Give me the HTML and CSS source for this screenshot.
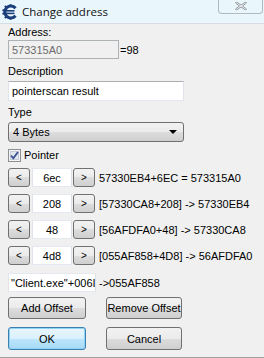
FILE: index.html
```html
<!DOCTYPE html>
<html lang="en">
<head>
    <meta charset="UTF-8">
    <title>Change address</title>
    <link rel="stylesheet" href="styles.css">
</head>
<body>

<div class="window">
    <!-- Title bar -->
    <div class="titlebar">
        <svg class="app-icon" width="16" height="16" viewBox="0 0 16 16">
            <path d="M13.5 4.2 A6 6 0 1 0 13.5 11.8" fill="none" stroke="#1b3f7a" stroke-width="3"/>
            <path d="M8 0.5 l1 2 M3 1.8 l1.3 1.8 M0.5 6 l2 0.8 M0.5 10 l2 -0.8 M3 14.2 l1.3 -1.8 M8 15.5 l1 -2" stroke="#1b3f7a" stroke-width="2"/>
            <rect x="3.5" y="6" width="9" height="1.6" fill="#1b3f7a"/>
            <rect x="3.5" y="8.6" width="9" height="1.6" fill="#1b3f7a"/>
        </svg>
        <span class="title">Change address</span>
        <div class="close-btn">
            <svg width="14" height="10" viewBox="0 0 14 10">
                <path d="M2.5 1 L7 4 L11.5 1 L12.5 2 L8.5 5 L12.5 8 L11.5 9 L7 6 L2.5 9 L1.5 8 L5.5 5 L1.5 2 Z" fill="#f4f4f4" stroke="#8a8f96" stroke-width="0.9"/>
            </svg>
        </div>
    </div>

    <div class="content">
        <div class="label">Address:</div>
        <div class="addr-row">
            <div class="textbox addr">573315A0</div>
            <span>=98</span>
        </div>

        <div class="label lbl-desc">Description</div>
        <div class="textbox desc">pointerscan result</div>

        <div class="label lbl-type">Type</div>
        <div class="combo">
            <span>4 Bytes</span>
            <span class="combo-arrow"></span>
        </div>

        <div class="check-row">
            <svg width="13" height="13" viewBox="0 0 13 13">
                <rect x="0.5" y="0.5" width="12" height="12" fill="#f4f4f4" stroke="#8e8f8f"/>
                <rect x="2.5" y="2.5" width="8" height="8" fill="#dfe6ee" stroke="#c4cdd8"/>
                <path d="M3 6.5 L5.3 9.3 L10 3" fill="none" stroke="#3c4f8f" stroke-width="1.8"/>
            </svg>
            <span>Pointer</span>
        </div>

        <div class="offset-row">
            <div class="btn spin">&lt;</div>
            <div class="textbox offset">6ec</div>
            <div class="btn spin">&gt;</div>
            <span class="offset-text">57330EB4+6EC = 573315A0</span>
        </div>
        <div class="offset-row">
            <div class="btn spin">&lt;</div>
            <div class="textbox offset">208</div>
            <div class="btn spin">&gt;</div>
            <span class="offset-text">[57330CA8+208] -&gt; 57330EB4</span>
        </div>
        <div class="offset-row">
            <div class="btn spin">&lt;</div>
            <div class="textbox offset">48</div>
            <div class="btn spin">&gt;</div>
            <span class="offset-text">[56AFDFA0+48] -&gt; 57330CA8</span>
        </div>
        <div class="offset-row">
            <div class="btn spin">&lt;</div>
            <div class="textbox offset">4d8</div>
            <div class="btn spin">&gt;</div>
            <span class="offset-text">[055AF858+4D8] -&gt; 56AFDFA0</span>
        </div>

        <div class="base-row">
            <div class="textbox base">"Client.exe"+006I</div>
            <span class="base-text">-&gt;055AF858</span>
        </div>

        <div class="btn-row">
            <div class="btn wide">Add Offset</div>
            <div class="btn wide right">Remove Offset</div>
        </div>
        <div class="btn-row ok-row">
            <div class="btn wide default">OK</div>
            <div class="btn wide right">Cancel</div>
        </div>
    </div>
</div>

</body>
</html>
```

FILE: styles.css
```css
body {
    margin: 0;
    background-color: #f0f0f0;
    font-family: 'Liberation Sans', Arial, sans-serif;
    font-size: 11px;
    color: #000;
}
.window {
    width: 264px;
    height: 357px;
    border-bottom: 1px solid #a0a0a0;
    background-color: #f0f0f0;
    overflow: hidden;
}
.titlebar {
    height: 23px;
    border-bottom: 1px solid #d8dde3;
    background-color: #e9f7fd;
    display: flex;
    align-items: center;
    position: relative;
}
.app-icon {
    margin-left: 2px;
    margin-top: 1px;
}
.title {
    margin-left: 4px;
    font-family: 'Open Sans', sans-serif;
    font-size: 11.5px;
    color: #111;
}
.close-btn {
    position: absolute;
    top: -1px;
    right: 1px;
    width: 43px;
    height: 14px;
    border: 1px solid #b2b9c2;
    border-top: none;
    border-radius: 0 0 4px 4px;
    display: flex;
    justify-content: center;
    align-items: center;
}
.content {
    padding: 2px 8px 0 8px;
}
.label {
    height: 13px;
    line-height: 13px;
}
.addr-row {
    display: flex;
    align-items: center;
    margin-top: 1px;
    height: 19px;
}
.textbox {
    box-sizing: border-box;
    background-color: #fff;
    border: 1px solid #abadb3;
    border-top-color: #e3e9ef;
    border-left-color: #e2e3ea;
    border-right-color: #dbdfe6;
    border-bottom-color: #e3e9ef;
    padding: 0 3px;
    display: flex;
    align-items: center;
    white-space: nowrap;
    overflow: hidden;
}
.addr {
    width: 111px;
    height: 19px;
    background-color: #f0f0f0;
    border-color: #adb2b5;
    color: #6d6d6d;
    margin-right: 1px;
}
.lbl-desc {
    margin-top: 6px;
}
.desc {
    margin-top: 3px;
    width: 176px;
    height: 20px;
    border-color: #abadb3 #e2e3ea #e3e9ef #e2e3ea;
}
.lbl-type {
    margin-top: 5px;
}
.combo {
    box-sizing: border-box;
    margin-top: 3px;
    width: 176px;
    height: 20px;
    border: 1px solid #707070;
    border-radius: 3px;
    background: linear-gradient(#f2f2f2, #ebebeb 50%, #dddddd 50%, #cfcfcf);
    display: flex;
    align-items: center;
    justify-content: space-between;
    padding: 0 6px 0 4px;
}
.combo-arrow {
    width: 0;
    height: 0;
    border-left: 4px solid transparent;
    border-right: 4px solid transparent;
    border-top: 4px solid #000;
}
.check-row {
    display: flex;
    align-items: center;
    gap: 3px;
    margin-top: 6px;
    height: 14px;
}
.offset-row {
    display: flex;
    align-items: center;
    height: 19px;
    margin-top: 6px;
}
.offset-row + .offset-row {
    margin-top: 7px;
}
.btn {
    box-sizing: border-box;
    border: 1px solid #707070;
    border-radius: 3px;
    background: linear-gradient(#f2f2f2, #ebebeb 50%, #dddddd 50%, #cfcfcf);
    display: flex;
    align-items: center;
    justify-content: center;
}
.spin {
    width: 22px;
    height: 19px;
    font-size: 10px;
}
.offset {
    width: 40px;
    height: 19px;
    margin: 0 1px 0 2px;
    justify-content: center;
}
.offset-text {
    margin-left: 4px;
    white-space: nowrap;
}
.base-row {
    display: flex;
    align-items: center;
    height: 19px;
    margin-top: 8px;
}
.base {
    width: 88px;
    height: 19px;
    padding: 0 2px;
}
.base-text {
    margin-left: 3px;
}
.btn-row {
    display: flex;
    gap: 20px;
    margin-top: 5px;
}
.wide {
    width: 78px;
    height: 22px;
}
.wide.right {
    width: 76px;
}
.ok-row {
    margin-top: 8px;
}
.ok-row .wide {
    height: 23px;
}
.default {
    border-color: #3c7fb1;
    background: linear-gradient(#eaf6fd, #d9f0fc 50%, #bee6fd 50%, #a7d9f5);
    box-shadow: inset 0 0 0 1px #8fd4f5;
}
```
